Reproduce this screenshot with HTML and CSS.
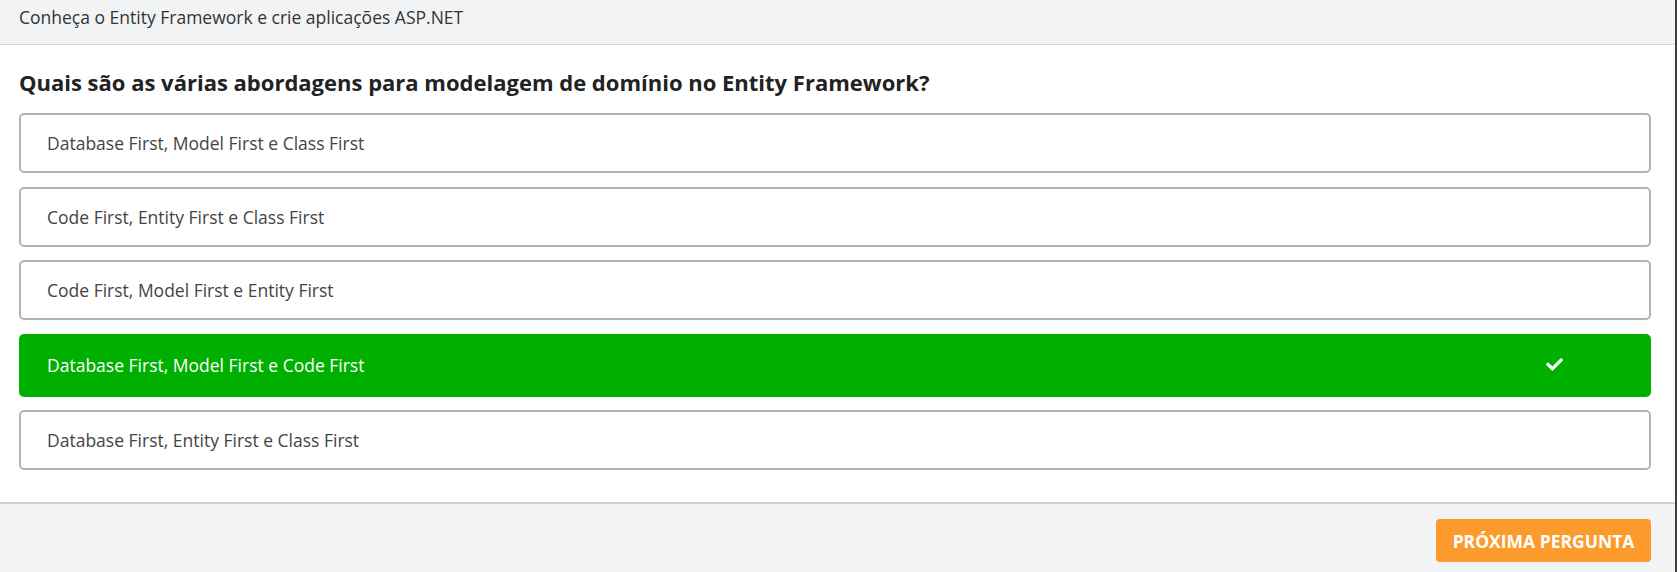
FILE: index.html
```html
<!DOCTYPE html>
<html lang="pt-BR">
<head>
<meta charset="utf-8">
<title>Quiz</title>
<link rel="stylesheet" href="styles.css">
</head>
<body>
<div class="page">
  <header class="header">Conheça o Entity Framework e crie aplicações ASP.NET</header>
  <main class="main">
    <h1 class="question">Quais são as várias abordagens para modelagem de domínio no Entity Framework?</h1>
    <ul class="options">
      <li class="option">Database First, Model First e Class First</li>
      <li class="option">Code First, Entity First e Class First</li>
      <li class="option">Code First, Model First e Entity First</li>
      <li class="option option-correct">
        <span>Database First, Model First e Code First</span>
        <svg class="check" viewBox="0 69 512 374" width="17" height="13" aria-hidden="true"><path fill="#fff" d="M173.898 439.404l-166.4-166.4c-9.997-9.997-9.997-26.206 0-36.204l36.203-36.204c9.997-9.998 26.207-9.998 36.204 0L192 312.69 432.095 72.596c9.997-9.997 26.207-9.997 36.204 0l36.203 36.204c9.997 9.997 9.997 26.206 0 36.204l-294.4 294.401c-9.998 9.997-26.207 9.997-36.204-.001z"/></svg>
      </li>
      <li class="option">Database First, Entity First e Class First</li>
    </ul>
  </main>
  <footer class="footer">
    <button class="next-btn">PRÓXIMA PERGUNTA</button>
  </footer>
</div>
</body>
</html>
```
FILE: styles.css
```css
* { box-sizing: border-box; }
html, body { margin: 0; padding: 0; }
body {
  font-family: "Open Sans", "Noto Sans", sans-serif;
  background: #fff;
}
.page {
  width: 1677px;
  height: 572px;
  border-right: 2px solid #3d3d3d;
  display: flex;
  flex-direction: column;
}
.header {
  height: 45px;
  background: #f2f3f5;
  border-bottom: 1px solid #d3d5d8;
  padding: 5px 19px 0;
  font-size: 17.5px;
  line-height: 24px;
  color: #333;
}
.main {
  flex: 1;
  padding: 21.5px 24px 0 19px;
  background: #fff;
}
.question {
  margin: 0 0 16.5px;
  font-size: 22px;
  line-height: 30px;
  font-weight: 700;
  color: #222;
}
.options {
  list-style: none;
  margin: 0;
  padding: 0;
  display: flex;
  flex-direction: column;
  gap: 13.5px;
}
.option {
  height: 60px;
  border: 2px solid #adb5bd;
  border-radius: 5px;
  padding: 0 26px;
  display: flex;
  align-items: center;
  font-size: 17.5px;
  color: #444;
}
.option-correct {
  height: 63px;
  border: none;
  background: #00b000;
  color: #fff;
  padding: 0 88px 0 28px;
  justify-content: space-between;
}
.check { display: block; margin-top: -1px; }
.footer {
  height: 70px;
  background: #f2f3f5;
  border-top: 2px solid #cfd0d2;
  padding: 15px 24px 0 0;
  display: flex;
  justify-content: flex-end;
  align-items: flex-start;
}
.next-btn {
  width: 215px;
  height: 43px;
  border: none;
  border-radius: 4px;
  background: #fd9a2c;
  color: #fff;
  font-family: "Open Sans", "Noto Sans", sans-serif;
  font-size: 17.5px;
  font-weight: 700;
  padding: 0;
}
```
